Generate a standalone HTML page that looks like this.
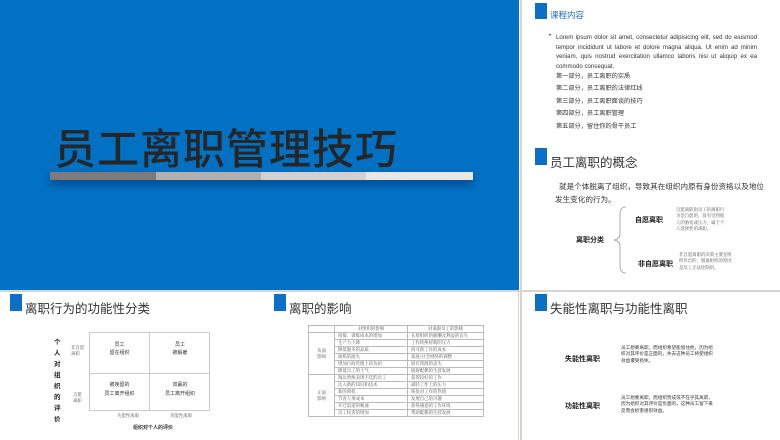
<!DOCTYPE html>
<html><head><meta charset="utf-8"><style>
*{margin:0;padding:0;box-sizing:border-box}
body{width:780px;height:440px;background:#fff;position:relative;overflow:hidden;font-family:"Liberation Sans","Noto Sans CJK SC",sans-serif;color:#333}
.a{position:absolute;white-space:nowrap}
.sq{position:absolute;width:12px;height:17px;background:#0b6fc8}
.t{position:absolute;font-size:12.5px;color:#333;white-space:nowrap}
.sm{font-family:"Noto Serif CJK SC",serif;font-size:4.4px;line-height:6.4px;color:#555;white-space:normal}
table{border-collapse:collapse}
td{border:0.5px solid #bbb;font-family:"Noto Serif CJK SC",serif;font-size:4.4px;color:#555;height:7px;padding:0 3px;line-height:6px}
</style></head><body>
<div class="a" style="left:0;top:0;width:519px;height:290px;background:#0270c3"></div>
<div class="a" style="left:0;top:290px;width:780px;height:1.5px;background:#d8d4d0"></div>
<div class="a" style="left:520px;top:0;width:1.5px;height:440px;background:#d8d4d0"></div>
<div class="a" style="left:54px;top:116px;font-size:42px;font-weight:500;color:#262626;letter-spacing:1px">员工离职管理技巧</div>
<div class="a" style="left:50px;top:172px;width:423px;height:8px;box-shadow:0 5px 8px rgba(0,0,40,.35);display:flex">
<div style="width:106px;background:#7f7b7a"></div><div style="width:105px;background:#b3afad"></div><div style="width:105px;background:#d3d0cf"></div><div style="width:107px;background:#e8e7e6"></div></div>

<div class="sq" style="left:535px;top:3px;height:16px"></div>
<div class="a" style="left:550px;top:9px;font-size:8.5px;color:#1a73c8">课程内容</div>
<div class="a" style="left:549px;top:33px;font-size:6px">•</div>
<div class="a" style="left:556px;top:33px;width:201px;font-size:6.1px;line-height:9.5px;white-space:normal;text-align:justify;color:#333">Lorem ipsum dolor sit amet, consectetur adipisicing elit, sed do eiusmod tempor incididunt ut labore et dolore magna aliqua. Ut enim ad minim veniam, quis nostrud exercitation ullamco laboris nisi ut aliquip ex ea commodo consequat.</div>
<div class="a" style="left:556px;top:71px;font-size:6.2px;line-height:12.4px;color:#333">第一部分，员工离职的实质<br>第二部分，员工离职的法律红线<br>第三部分，员工离职面谈的技巧<br>第四部分，员工离职管理<br>第五部分，留住你的骨干员工</div>

<div class="sq" style="left:535px;top:148px"></div>
<div class="t" style="left:550px;top:152px;font-size:12.5px">员工离职的概念</div>
<div class="a" style="left:559px;top:180px;font-size:7.6px;line-height:13px;white-space:normal;width:210px;color:#333">就是个体脱离了组织，导致其在组织内原有身份资格以及地位<br><span style="margin-left:-4px">发生变化的行为。</span></div>
<svg class="a" style="left:612px;top:206px" width="16" height="68"><path d="M14 1 Q8 1 8 8 L8 28 Q8 33 2 34 Q8 35 8 40 L8 60 Q8 67 14 67" fill="none" stroke="#999" stroke-width="0.8"/></svg>
<div class="a" style="left:635px;top:215px;font-size:7px;font-weight:bold;color:#222">自愿离职</div>
<div class="a sm" style="left:676px;top:207px;width:52px">自愿离职指员工的离职行为是自愿的，没有受到他人的胁迫或压力，属于个人选择性的离职。</div>
<div class="a" style="left:576px;top:235px;font-size:7px;font-weight:bold;color:#222">离职分类</div>
<div class="a" style="left:638px;top:259px;font-size:7px;font-weight:bold;color:#222">非自愿离职</div>
<div class="a sm" style="left:679px;top:252px;width:56px">非自愿离职的决策主要是组织作出的，脱离组织的原因是员工无法控制的。</div>

<div class="sq" style="left:10px;top:294px"></div>
<div class="t" style="left:25px;top:298px">离职行为的功能性分类</div>
<div class="a" style="left:54px;top:337px;font-size:6.5px;font-weight:bold;line-height:11px;width:8px;white-space:normal;color:#222">个人对组织的评价</div>
<div class="a sm" style="left:71px;top:345px;width:16px">非自愿离职</div>
<div class="a sm" style="left:73px;top:392px;width:12px">自愿离职</div>
<div class="a" style="left:89px;top:332px;width:121px;height:79px;border:0.6px solid #ccc"></div>
<div class="a" style="left:149px;top:332px;width:0.6px;height:79px;background:#ccc"></div>
<div class="a" style="left:89px;top:373px;width:121px;height:0.6px;background:#ccc"></div>
<div class="a" style="left:90px;top:341px;width:59px;text-align:center;font-size:5px;line-height:8px">员工<br>留在组织</div>
<div class="a" style="left:150px;top:341px;width:60px;text-align:center;font-size:5px;line-height:8px">员工<br>被解雇</div>
<div class="a" style="left:90px;top:381px;width:59px;text-align:center;font-size:5px;line-height:9px">被挽留的<br>员工离开组织</div>
<div class="a" style="left:150px;top:381px;width:60px;text-align:center;font-size:5px;line-height:9px">双赢的<br>员工离开组织</div>
<div class="a sm" style="left:117px;top:413px">失能性离职</div>
<div class="a sm" style="left:170px;top:413px">功能性离职</div>
<div class="a" style="left:133px;top:424px;font-size:5px;font-weight:bold">组织对个人的评价</div>

<div class="sq" style="left:274px;top:294px"></div>
<div class="t" style="left:289px;top:298px">离职的影响</div>
<table class="a" style="left:308px;top:325px;width:176px">
<tr><td style="width:26px"></td><td style="width:73px;text-align:center">对组织的影响</td><td style="text-align:center">对离职员工的影响</td></tr>
<tr><td rowspan="6" style="text-align:center">负面<br>影响</td><td>招募、训练成本的增加</td><td>在原组织的薪酬及利益的丧失</td></tr>
<tr><td>生产力下降</td><td>工作转换时期的压力</td></tr>
<tr><td>降低服务的品质</td><td>找寻新工作的成本</td></tr>
<tr><td>商机的流失</td><td>家庭/社会网络的调整</td></tr>
<tr><td>增加行政管理上的负担</td><td>原有资源的丧失</td></tr>
<tr><td>降低员工的士气</td><td>阻碍配偶的生涯发展</td></tr>
<tr><td rowspan="6" style="text-align:center">正面<br>影响</td><td>淘汰替换表现不佳的员工</td><td>获得较好的工作</td></tr>
<tr><td>注入新的知识和技术</td><td>减轻工作上的压力</td></tr>
<tr><td>新的商机</td><td>恢复对工作的热情</td></tr>
<tr><td>节省人事成本</td><td>发展自己的兴趣</td></tr>
<tr><td>升迁渠道的畅通</td><td>获得满意的工作环境</td></tr>
<tr><td>员工权责的增加</td><td>帮助配偶的生涯发展</td></tr>
</table>
<div class="a" style="left:518px;top:292px;width:1px;height:148px;background:#d8d4d0"></div>

<div class="sq" style="left:535px;top:294px"></div>
<div class="t" style="left:550px;top:298px">失能性离职与功能性离职</div>
<div class="a" style="left:565px;top:354px;font-size:7px;font-weight:bold;color:#222">失能性离职</div>
<div class="a" style="left:621px;top:345px;width:96px;font-size:4.6px;line-height:6.3px;white-space:normal;color:#333">员工想要离职，而组织希望能留住他，因为组织对其评价是正面的，失去这种员工将使组织效益遭受损失。</div>
<div class="a" style="left:565px;top:401px;font-size:7px;font-weight:bold;color:#222">功能性离职</div>
<div class="a" style="left:621px;top:395px;width:96px;font-size:4.6px;line-height:6.3px;white-space:normal;color:#333">员工想要离职，而组织赞成或不在乎其离职，因为组织对其评价是负面的，这种员工留下来反而会损害组织效益。</div>
</body></html>
